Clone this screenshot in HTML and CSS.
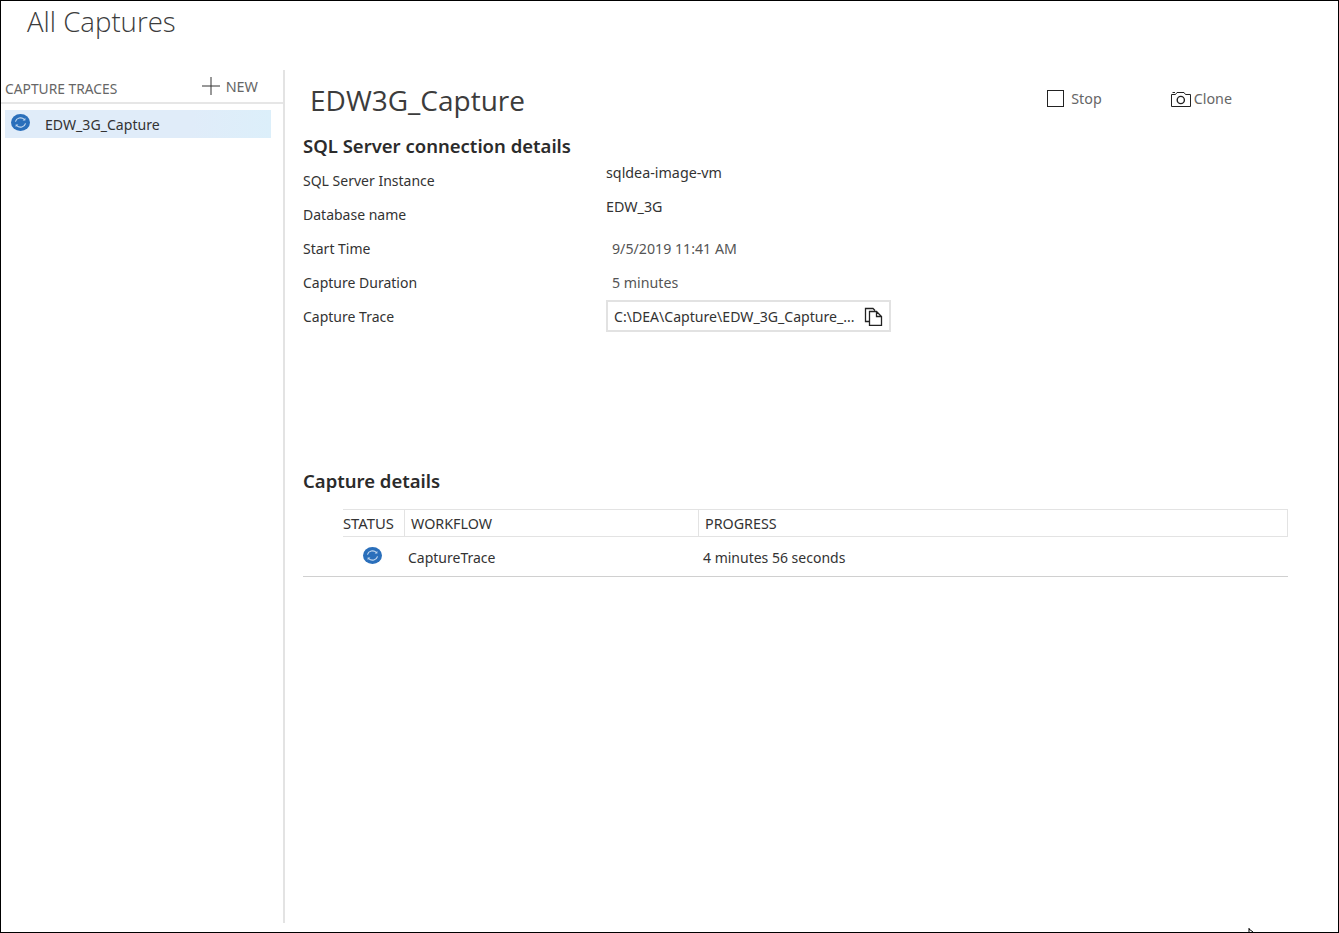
FILE: index.html
```html
<!DOCTYPE html>
<html lang="en">
<head>
  <meta charset="UTF-8" />
  <title>All Captures</title>
  <link rel="stylesheet" href="styles.css">
</head>
<body>
  <div class="frame">
    <div class="page-title">All Captures</div>

    <div class="content">
      <div class="sidebar">
        <div class="side-head">
          <span class="side-title">CAPTURE TRACES</span>
          <span class="new-btn">
            <svg class="plus" width="18" height="18" viewBox="0 0 18 18"><path d="M0 9H18M9 0V18" stroke="#333" stroke-width="1" fill="none"/></svg>
            NEW
          </span>
        </div>
        <div class="side-item">
          <svg class="spin" width="19" height="17" viewBox="0 0 18 18" preserveAspectRatio="none"><use href="#running"/></svg>
          <span>EDW_3G_Capture</span>
        </div>
      </div>

      <div class="main">
        <div class="main-head">
          <h1>EDW3G_Capture</h1>
          <div class="actions">
            <span class="action stop"><span class="stop-box"></span>Stop</span>
            <span class="action clone">
              <svg width="20" height="15" viewBox="0 0 20 15"><path d="M.5 2.5H4.5L6 .5H13L14.5 2.5H19.5V14.5H.5Z" fill="none" stroke="#222"/><circle cx="9.8" cy="8" r="3.6" fill="none" stroke="#222" stroke-width="1.4"/><path d="M1.5 .5H4" stroke="#222"/></svg>
              Clone
            </span>
          </div>
        </div>

        <h2 class="conn-title">SQL Server connection details</h2>
        <div class="details">
          <div class="row r1"><span>SQL Server Instance</span><span class="val up">sqldea-image-vm</span></div>
          <div class="row r2"><span>Database name</span><span class="val up">EDW_3G</span></div>
          <div class="row r3"><span>Start Time</span><span class="val soft">9/5/2019 11:41 AM</span></div>
          <div class="row r4"><span>Capture Duration</span><span class="val soft">5 minutes</span></div>
          <div class="row r5">
            <span>Capture Trace</span>
            <span class="path-box">
              <span class="path-text">C:\DEA\Capture\EDW_3G_Capture_...</span>
              <svg width="19" height="19" viewBox="0 0 19 19"><path d="M5.5 14.5H1.5V1.5H9L11 3.5M5.5 4.5H12.5L17.5 9.5V18.5H5.5ZM12.5 4.5V9.5H17.5" fill="none" stroke="#222" stroke-width="1.3"/></svg>
            </span>
          </div>
        </div>

        <h2 class="cap-title">Capture details</h2>
        <div class="table">
          <div class="thead">
            <div class="th th-status">STATUS</div>
            <div class="th th-flow">WORKFLOW</div>
            <div class="th th-prog">PROGRESS</div>
          </div>
          <div class="tbody">
            <div class="td td-status"><svg width="19" height="17" viewBox="0 0 18 18" preserveAspectRatio="none"><use href="#running"/></svg></div>
            <div class="td td-flow">CaptureTrace</div>
            <div class="td td-prog">4 minutes 56 seconds</div>
          </div>
        </div>
      </div>
    </div>

    <svg class="cursor" width="7" height="5" viewBox="0 0 7 5"><path d="M1 0V5M1 1L5 4" stroke="#000" fill="none"/></svg>
  </div>

  <svg width="0" height="0" class="defs">
    <symbol id="running" viewBox="0 0 18 18" preserveAspectRatio="none">
      <circle cx="9" cy="9" r="9" fill="#2a6fbb"/>
      <path d="M4.2 8A5 5 0 0 1 12.6 5.6M13.8 10A5 5 0 0 1 5.4 12.4" fill="none" stroke="#c3d8ef" stroke-width="1.1"/>
      <path d="M13.6 4.2V7H11ZM4.4 13.8V11H7Z" fill="#c3d8ef"/>
    </symbol>
  </svg>
</body>
</html>
```

FILE: styles.css
```css
* { box-sizing: border-box; }
html, body {
  margin: 0; padding: 0; height: 100%;
  background: #fff;
  font-family: "Noto Sans", "Open Sans", sans-serif;
  color: #333;
}
.defs { position: absolute; }
.frame {
  position: relative;
  height: 933px;
  overflow: hidden;
  border: 1px solid #000;
  padding-top: 3px;
  display: flex;
  flex-direction: column;
}
.cursor { position: absolute; left: 1247px; bottom: -1px; }
.page-title {
  font-family: "Open Sans", sans-serif;
  font-weight: 300;
  font-size: 27.6px;
  line-height: 34px;
  color: #3c3c3c;
  padding-left: 26px;
  height: 66px;
}
.content {
  display: flex;
  height: 853px;
}

/* left column */
.sidebar {
  width: 284px;
  flex: none;
  border-right: 2px solid #e3e3e3;
  padding-left: 4px;
}
.side-head {
  height: 34px;
  margin-left: -4px;
  padding: 0 25px 0 4px;
  border-bottom: 2px solid #e6e6e6;
  display: flex;
  justify-content: space-between;
  align-items: center;
  color: #666;
  font-size: 14.4px;
}
.side-title { padding-top: 5px; font-size: 13.8px; }
.new-btn { display: flex; align-items: center; gap: 6px; }
.side-item {
  margin-top: 6px;
  width: 266px;
  height: 28px;
  background: linear-gradient(90deg, #e0ecf9 0%, #e0ecf9 70%, #dceffa 100%);
  display: flex;
  align-items: center;
  padding-left: 6px;
  gap: 15px;
  font-size: 14.1px;
  color: #333;
}
.spin { margin-top: -3px; }

/* right column */
.main {
  flex: 1;
  padding: 0 50px 0 18px;
  font-size: 14px;
  color: #333;
}
.main-head {
  display: flex;
  justify-content: space-between;
  height: 64px;
  padding-top: 12px;
  margin-right: -50px;
}
h1 {
  margin: 0 0 0 7px;
  font-family: "Open Sans", sans-serif;
  font-weight: 400;
  font-size: 28px;
  line-height: 36px;
  color: #3c3c3c;
}
.actions { display: flex; padding: 8px 106px 0 0; gap: 69px; }
.action { display: flex; align-items: flex-start; color: #666; font-size: 14.3px; line-height: 18px; }
.stop { gap: 7px; }
.clone { gap: 3px; }
.clone svg { margin-top: 2px; }
.stop-box { width: 17px; height: 17px; border: 1.5px solid #222; }

h2 {
  margin: 0;
  font-size: 18.5px;
  font-weight: 600;
  line-height: 24px;
  color: #2b2b2b;
}
.details { margin-top: 6px; }
.row {
  display: flex;
  height: 34px;
  align-items: center;
}
.row > span:first-child { width: 303px; flex: none; }
.r1 { height: 33px; }
.val.up { margin-top: -16px; color: #333; font-size: 14.3px; }
.val.soft { padding-left: 6px; color: #555; font-size: 14.2px; }
.path-box {
  width: 285px;
  height: 32px;
  border: 2px solid #e2e2e2;
  display: flex;
  align-items: center;
  justify-content: space-between;
  padding: 0 6px 0 6px;
  font-size: 14.1px;
}
.cap-title { margin-top: 136px; }

.table { margin-top: 16px; }
.thead {
  margin-left: 40px;
  display: flex;
  height: 28px;
  border: 1px solid #e3e3e3;
  border-left: 0;
  font-size: 14.3px;
}
.th { display: flex; align-items: center; }
.th-status { width: 62px; border-right: 1px solid #e3e3e3; font-size: 14.8px; }
.th-flow { width: 294px; padding-left: 6px; border-right: 1px solid #e3e3e3; }
.th-prog { padding-left: 6px; }
.tbody {
  display: flex;
  height: 40px;
  padding-top: 1px;
  align-items: center;
  border-bottom: 1px solid #d0d0d0;
}
.td-status { width: 105px; padding-left: 60px; display: flex; margin-top: -4px; }
.td-flow { width: 295px; font-size: 14px; }
.td-prog { font-size: 14px; }
```
